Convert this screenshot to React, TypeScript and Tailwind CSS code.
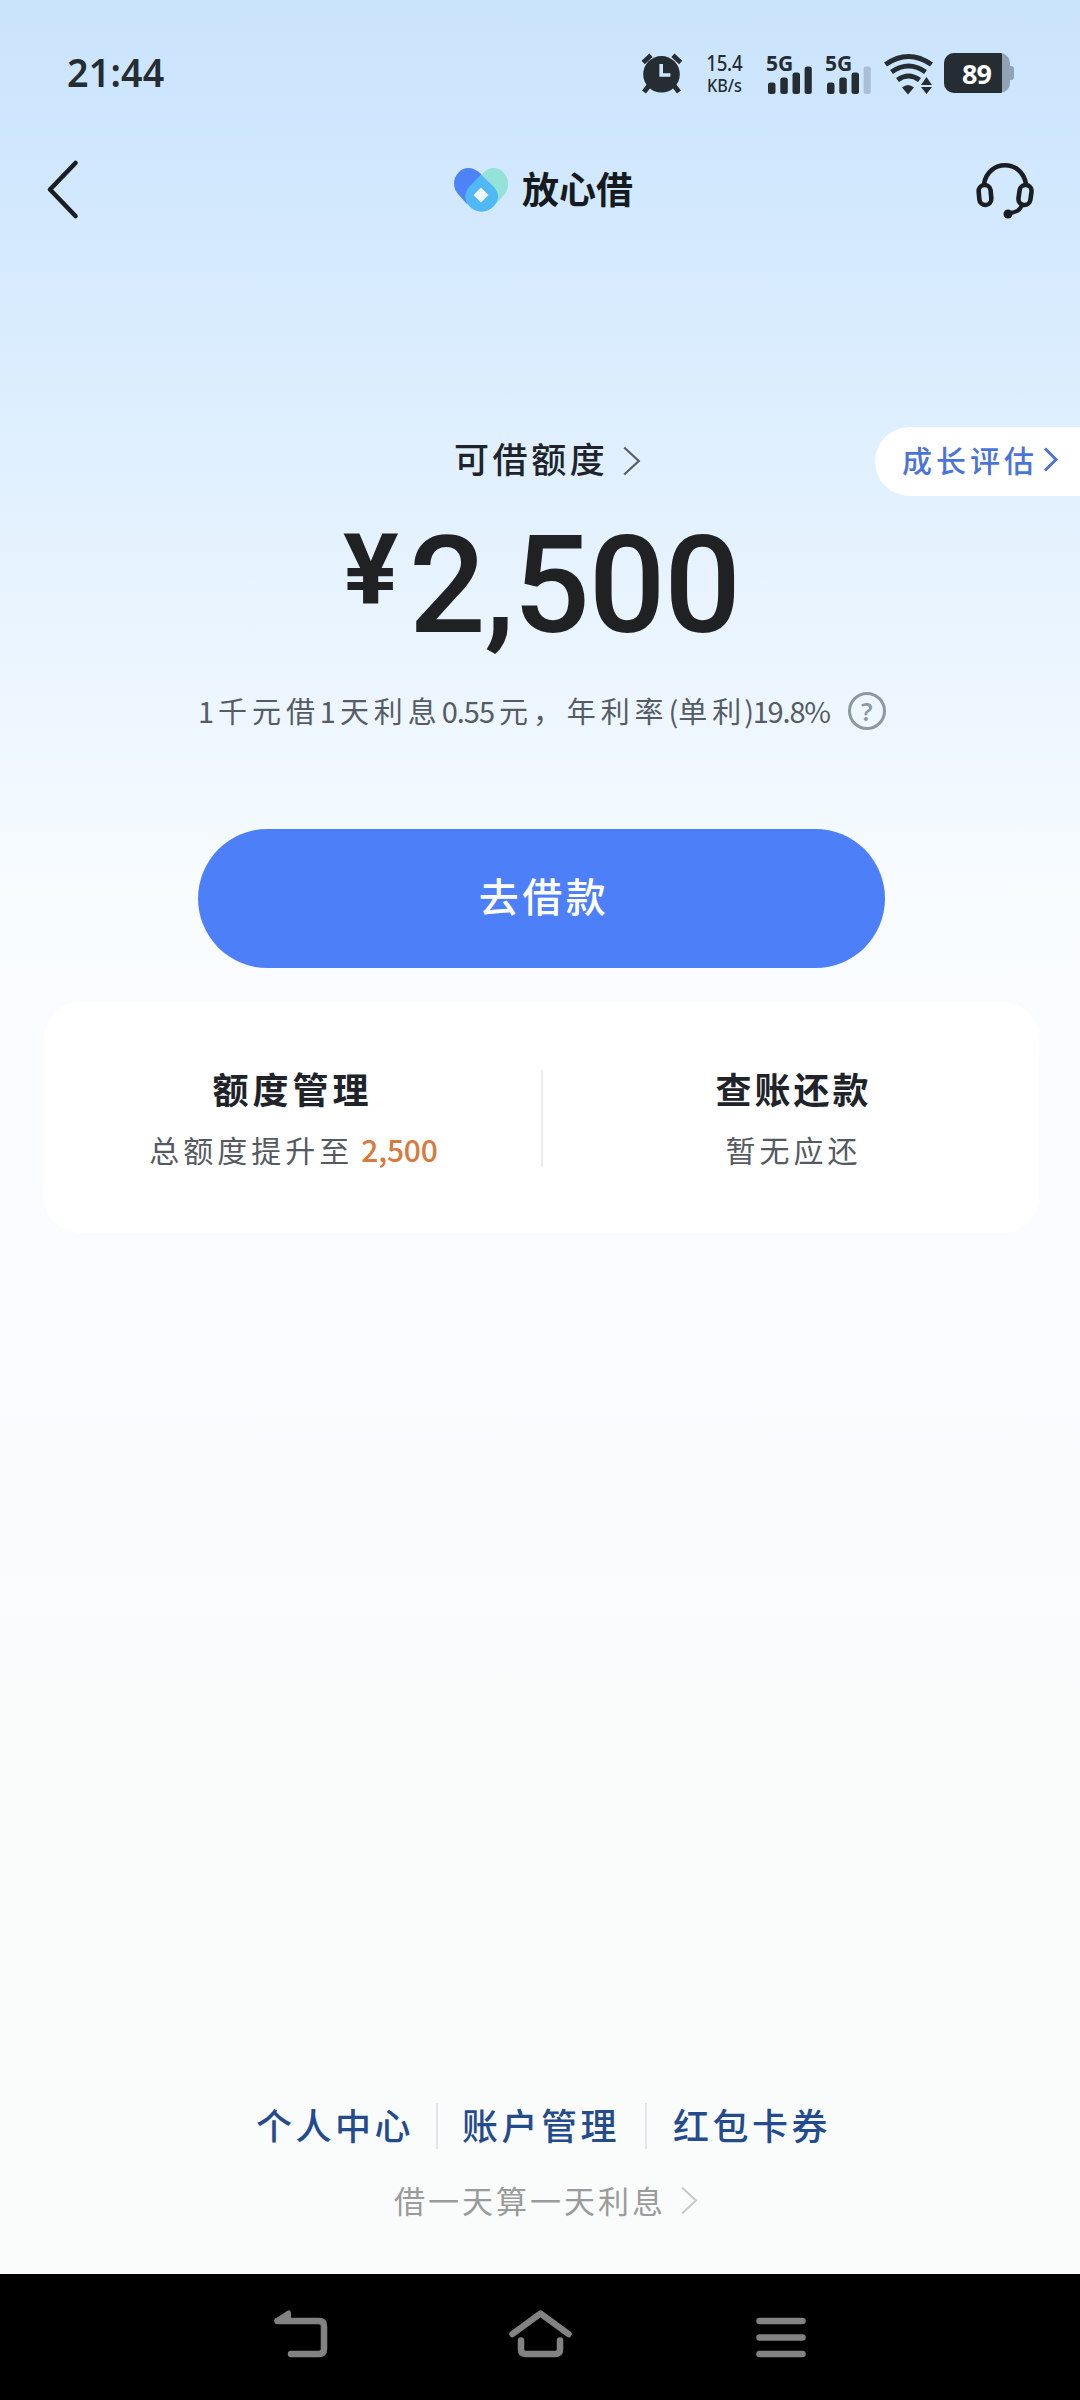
import React from 'react';

const hand = "font-['Noto_Sans_CJK_SC',sans-serif]";

function SignalBars({ last }: { last: string }) {
  return (
    <div className="relative h-[42px] w-[46px] shrink-0">
      <svg width="46" height="42" viewBox="0 0 46 42" fill="#252d33">
        <rect x="2" y="29.500" width="7.5" height="11.500" rx="2.5" />
        <rect x="14.3" y="24.500" width="7.5" height="16.500" rx="2.5" />
        <rect x="26.5" y="19.500" width="7.5" height="21.500" rx="2.5" />
        <rect x="38.6" y="13.500" width="7.2" height="27.500" rx="2.5" fill={last} />
      </svg>
      <span className="absolute left-0 top-[-3px] font-['Open_Sans',sans-serif] text-[21px] font-bold leading-[26px] whitespace-nowrap text-[#252d33]">5G</span>
    </div>
  );
}

function StatusBar() {
  return (
    <header className="flex h-[96px] items-start pt-[52px] text-[#252d33]">
      <div className="ml-[67px] mt-px h-[38px] w-[110px] origin-left scale-x-[0.94] font-['Noto_Sans',sans-serif] text-[40px] font-semibold leading-[38px] tracking-[0.2px] whitespace-nowrap">21:44</div>
      <svg width="44" height="44" viewBox="0 0 44 44" className="ml-[463px] shrink-0">
        <g stroke="#252d33" fill="none">
          <path d="M3.2 10.5 11 3.2M32.9 3.2l7.8 7.3" strokeWidth="4.6" />
          <path d="m9.500 33-5.500 7M33.500 33l5.500 7" strokeWidth="5" />
        </g>
        <circle cx="21.5" cy="22.300" r="18.300" fill="#252d33" />
        <path d="M21.200 12v11h9.200" fill="none" stroke="#cfe7fe" strokeWidth="3.600" />
      </svg>
      <div className="ml-[20px] flex w-[40px] flex-col items-center font-['Noto_Sans',sans-serif] font-medium">
        <span className="origin-center scale-x-[0.85] text-[22px] leading-[21px] tracking-[-0.3px]">15.4</span>
        <span className="origin-center scale-x-[0.9] text-[18px] leading-[25px]">KB/s</span>
      </div>
      <div className="ml-[22px] mt-px flex gap-[13px]">
        <SignalBars last="#252d33" />
        <SignalBars last="#aabfd6" />
      </div>
      <svg width="50" height="42" viewBox="0 0 50 42" className="ml-[13px] mt-px shrink-0" fill="none" stroke="#252d33" strokeWidth="5">
        <path d="M1.500 11.500q23-16 46 0M7.500 19q17-12 34 0M13.500 27q11-8 22 0" />
        <path d="M18 34.500q6-5 12 0L24 41.500z" fill="#252d33" stroke="none" />
        <path d="m42.500 24 5.500 8H37zM37 34h11l-5.500 7z" fill="#252d33" stroke="none" />
      </svg>
      <div className="ml-[10px] mt-px flex items-center">
        <div className="flex h-[40px] w-[66px] overflow-hidden rounded-[10px] bg-[#8fa3b5]">
          <div className="flex h-full w-[58px] items-center justify-center bg-[#252d33] pl-[7px] font-['Noto_Sans',sans-serif] text-[27px] font-bold leading-none tracking-[-1px] text-white">89</div>
        </div>
        <div className="h-[14px] w-[4px] rounded-r-[3px] bg-[#8fa3b5]" />
      </div>
    </header>
  );
}

function TitleBar() {
  return (
    <div className="flex h-[188px] items-start pt-[62px]">
      <svg width="34" height="64" viewBox="0 0 34 64" className="ml-[45px] shrink-0" fill="none" stroke="#1a1e22" strokeWidth="4.600" strokeLinecap="round" strokeLinejoin="round">
        <path d="M30.500 5 5 31.500 30.500 58" />
      </svg>
      <svg width="56" height="46" viewBox="0 0 56 46" className="ml-[375px] mt-[9px] shrink-0">
        <path d="M28 7C35-1 44 0 49 5c7 7 6 17 1 23l-8 9-18-25z" fill="#95e2d8" />
        <path d="M27 7C19-1 10 0 5 5-2 12-1 21 4 27l9 10 16-25z" fill="#4d83f6" />
        <path d="M27 7.500 39.500 19.500C46 26 45 34 40 39c-7 7.500-18 7.500-25 0-5-6-5-13 0-19z" fill="#50b9f5" />
        <path d="m27 20.500 7.500 7.500-7.500 7.500-7.500-7.500z" fill="#f0f9ff" />
      </svg>
      <span className={`${hand} ml-[12px] mt-[7px] w-[120px] text-[37px] font-bold leading-[46px] text-[#151a1f] whitespace-nowrap`}>放心借</span>
      <svg width="60" height="60" viewBox="0 0 60 60" className="ml-[333px] mt-[4px] shrink-0" fill="none" stroke="#1a1e22" strokeWidth="4.600" strokeLinecap="round">
        <path d="M9 22C13-3 47-3 51 22" />
        <rect x="4" y="23" width="12" height="20" rx="6" transform="rotate(-5 10 33)" />
        <rect x="44" y="23" width="12" height="20" rx="6" transform="rotate(8 50 33)" />
        <path d="M47 43c-2 6-7 8-15 8" strokeWidth="4" />
        <circle cx="33" cy="52" r="4.500" fill="#1a1e22" stroke="none" />
      </svg>
    </div>
  );
}

function Chevron({ w, h, color, stroke, className }: { w: number; h: number; color: string; stroke: number; className: string }) {
  return (
    <svg width={w} height={h} viewBox={`0 0 ${w} ${h}`} className={className} fill="none" stroke={color} strokeWidth={stroke}>
      <path d={`M${stroke} 1.500 ${w - stroke} ${h / 2} ${stroke} ${h - 1.5}`} />
    </svg>
  );
}

function Quota() {
  return (
    <section>
      <div className="flex h-[92px] items-center justify-between">
        <div className="mb-[6px] ml-[454px] flex items-center">
          <span className={`${hand} text-[35px] font-medium leading-[44px] tracking-[3.600px] text-[#20242a]`}>可借额度</span>
          <Chevron w={19} h={30} color="#555c68" stroke={2.2} className="ml-[14px] mt-[6px]" />
        </div>
        <button className="flex h-[69px] w-[205px] items-center rounded-l-full bg-white pb-[4px] pl-[27px]">
          <span className={`${hand} text-[30px] font-medium leading-[40px] tracking-[4px] text-[#4a74d8] whitespace-nowrap`}>成长评估</span>
          <Chevron w={17} h={25} color="#4a74d8" stroke={3} className="ml-[4px] mt-px shrink-0" />
        </button>
      </div>
      <div className="ml-[343px] flex h-[150px] items-start pt-[11px] font-['Roboto',sans-serif] text-[#1f2122]">
        <span className="mt-[4px] w-[66px] origin-left scale-x-[1.06] text-[98px] font-bold leading-[98px] tracking-[-2px]">¥</span>
        <span className="text-[135px] font-medium leading-[137px] tracking-[-1.300px]">2,500</span>
      </div>
      <div className={`${hand} ml-[198px] mt-[28px] flex h-[52px] items-center text-[29px] leading-[40px] tracking-[4.900px] text-[#555c66] whitespace-nowrap`}>
        <span className="mb-[3px] flex">
          <span className="tracking-[4px]">1</span>
          <span>千元借</span>
          <span className="tracking-[4px]">1</span>
          <span>天利息</span>
          <span className="tracking-[-1px]">0.55</span>
          <span className="ml-[5px]">元，年利率</span>
          <span className="tracking-[0px]">(</span>
          <span>单利</span>
          <span className="ml-[-2px] tracking-[-1.200px]">)19.8%</span>
        </span>
        <span className="ml-[18px] flex h-[38px] w-[38px] items-center justify-center rounded-full border-[3px] border-[#8f979f] font-['Noto_Sans',sans-serif] text-[25px] font-semibold tracking-normal text-[#8f979f]">?</span>
      </div>
      <button className={`${hand} ml-[198px] mt-[92px] flex h-[139px] w-[687px] items-center justify-center rounded-full bg-[#4c7ff8] pb-[8px] pl-[5px] text-[40px] font-medium tracking-[3.500px] text-white`}>去借款</button>
    </section>
  );
}

function Panel() {
  return (
    <section className="ml-[44px] mt-[34px] flex h-[231px] w-[995px] items-start rounded-[36px] bg-white pt-[61px]">
      <div className={`${hand} flex w-[497px] flex-col items-center`}>
        <span className="text-[36px] font-bold leading-[50px] tracking-[4px] text-[#20242a]">额度管理</span>
        <span className="mt-[12px] flex pl-[2px] text-[30px] leading-[48px] tracking-[4px] text-[#555a62] whitespace-nowrap">
          总额度提升至<b className="ml-[8px] font-medium tracking-[-0.200px] text-[#d97a3c]">2,500</b>
        </span>
      </div>
      <div className="mt-[7px] h-[97px] w-[2px] bg-[#ebecee]" />
      <div className={`${hand} flex w-[495px] flex-col items-center pl-[6px]`}>
        <span className="text-[36px] font-bold leading-[50px] tracking-[3px] text-[#20242a]">查账还款</span>
        <span className="mt-[12px] text-[30px] leading-[48px] tracking-[4px] text-[#555a62]">暂无应还</span>
      </div>
    </section>
  );
}

function FooterLinks() {
  return (
    <footer className={`${hand} mt-[863px] h-[178px]`}>
      <nav className="ml-[256px] flex h-[60px] items-center text-[36px] font-medium tracking-[3.500px] text-[#244b8d] whitespace-nowrap">
        <a className="w-[180px] pb-[4px]">个人中心</a>
        <i className="h-[46px] w-[2px] bg-[#e1e4e8]" />
        <a className="ml-[24px] w-[183px] pb-[4px]">账户管理</a>
        <i className="h-[46px] w-[2px] bg-[#e1e4e8]" />
        <a className="ml-[26px] pb-[4px]">红包卡券</a>
      </nav>
      <div className="ml-[394px] mt-[20px] flex h-[48px] items-center text-[31px] tracking-[3px] text-[#999b9c] whitespace-nowrap">
        <span>借一天算一天利息</span>
        <Chevron w={18} h={29} color="#c6c8c9" stroke={2} className="ml-[14px]" />
      </div>
    </footer>
  );
}

function SystemNav() {
  return (
    <div className="flex h-[126px] items-start bg-black pt-[34px]">
      <svg width="60" height="56" viewBox="0 0 60 56" className="ml-[270px] shrink-0" fill="none" stroke="#828282" strokeWidth="6.500" strokeLinecap="round" strokeLinejoin="round">
        <path d="M7.500 13H49q5 0 5 5v23q0 5-5 5H21" />
        <path d="M7 12.500 18.500 5v6z" strokeWidth="5" fill="#828282" />
      </svg>
      <svg width="68" height="56" viewBox="0 0 68 56" className="ml-[176px] shrink-0" fill="none" stroke="#828282" strokeWidth="6.500" strokeLinecap="round" strokeLinejoin="round">
        <path d="M6.500 26 34.500 5.500 62.500 26M15 32.500v9q0 4.500 5 4.500h29q5 0 5-4.500v-9" />
      </svg>
      <svg width="56" height="56" viewBox="0 0 56 56" className="ml-[178px] shrink-0" stroke="#828282" strokeWidth="6.500" strokeLinecap="round">
        <path d="M7.500 13h43M7.500 29.500h43M7.500 46h43" />
      </svg>
    </div>
  );
}

export default function App() {
  return (
    <main className="flex h-[2400px] w-[1080px] flex-col overflow-hidden bg-[linear-gradient(180deg,#c9e3fb_0px,#cde6fd_80px,#d2e8fd_200px,#deeffe_420px,#e9f4fe_620px,#f3faff_820px,#f9fcff_900px,#fafcff_1150px,#fafbfd_1500px,#fafcfb_1800px)]">
      <StatusBar />
      <TitleBar />
      <div className="h-[131px] shrink-0" />
      <Quota />
      <Panel />
      <FooterLinks />
      <SystemNav />
    </main>
  );
}
